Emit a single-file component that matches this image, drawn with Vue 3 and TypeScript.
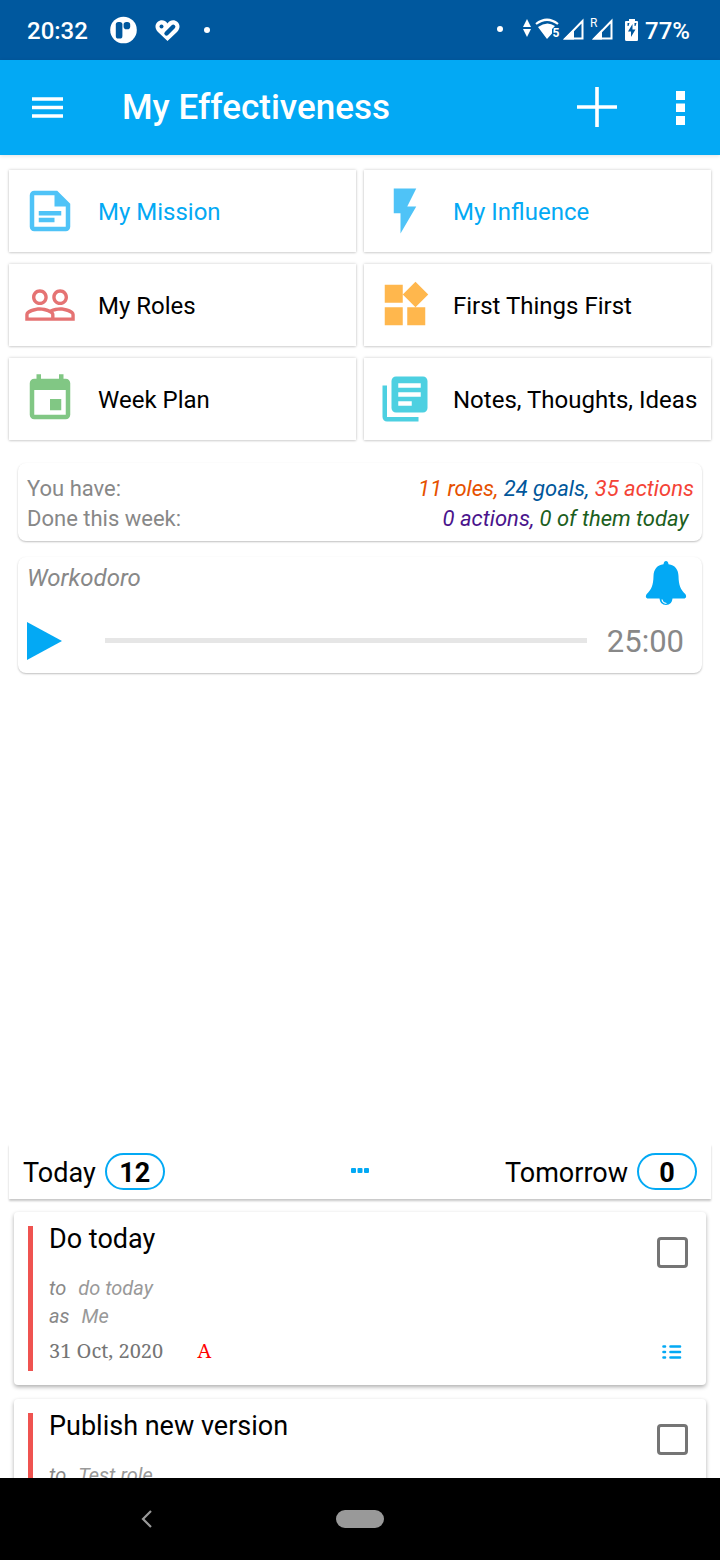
<script setup lang="ts">
import { ref } from 'vue'

interface Shortcut {
  label: string
  color: string
  accent: boolean
  path: string
}

interface Task {
  id: string
  title: string
  goal: string
  role: string
  date: string
  priority: string
  done: boolean
}

const shortcuts: Shortcut[] = [
  {
    label: 'My Mission',
    color: '#4fc3f7',
    accent: true,
    path: 'M5 3h10.200l5.800 5.800V19c0 1.100-.9 2-2 2H5c-1.100 0-2-.9-2-2V5c0-1.100.9-2 2-2zM5 5v14h14v-9h-5V5zM7 12h10v2H7zM7 15h7v2H7z',
  },
  { label: 'My Influence', color: '#4fc3f7', accent: true, path: 'M7 2v11h3v9l7-12h-4l4-8z' },
  {
    label: 'My Roles',
    color: '#e57373',
    accent: false,
    path: 'M16.5 13c-1.200 0-3.070.34-4.500 1-1.430-.67-3.300-1-4.500-1C5.330 13 1 14.080 1 16.250V19h22v-2.750c0-2.170-4.330-3.250-6.500-3.250zm-4 4.500h-10v-1.250c0-.54 2.560-1.750 5-1.750s5 1.210 5 1.750v1.250zm9 0H14v-1.250c0-.46-.2-.86-.52-1.220.88-.3 1.960-.53 3.020-.53 2.440 0 5 1.210 5 1.750v1.250zM7.500 12c1.930 0 3.500-1.570 3.500-3.500S9.430 5 7.500 5 4 6.570 4 8.500 5.570 12 7.500 12zm0-5.500c1.100 0 2 .9 2 2s-.9 2-2 2-2-.9-2-2 .9-2 2-2zm9 5.500c1.930 0 3.500-1.570 3.500-3.500S18.430 5 16.500 5 13 6.570 13 8.500s1.570 3.500 3.500 3.500zm0-5.500c1.100 0 2 .9 2 2s-.9 2-2 2-2-.9-2-2 .9-2 2-2z',
  },
  {
    label: 'First Things First',
    color: '#ffb74d',
    accent: false,
    path: 'M13 13v8h8v-8h-8zM3 21h8v-8H3v8zM3 3v8h8V3H3zm13.660-1.310L11 7.340 16.660 13l5.660-5.660-5.660-5.650z',
  },
  {
    label: 'Week Plan',
    color: '#81c784',
    accent: false,
    path: 'M17 12h-5v5h5v-5zM16 1v2H8V1H6v2H5c-1.110 0-2 .9-2 2v14c0 1.100.89 2 2 2h14c1.100 0 2-.9 2-2V5c0-1.100-.9-2-2-2h-1V1h-2zm3 18H5V8h14v11z',
  },
  {
    label: 'Notes, Thoughts, Ideas',
    color: '#4dd0e1',
    accent: false,
    path: 'M4 6H2v14c0 1.100.9 2 2 2h14v-2H4V6zm16-4H8c-1.100 0-2 .9-2 2v12c0 1.100.9 2 2 2h12c1.100 0 2-.9 2-2V4c0-1.100-.9-2-2-2zm-1 9H9V9h10v2zm-4 4H9v-2h6v2zm4-8H9V5h10v2z',
  },
]

const tasks = ref<Task[]>([
  { id: 'today', title: 'Do today', goal: 'do today', role: 'Me', date: '31 Oct, 2020', priority: 'A', done: false },
  { id: 'publish', title: 'Publish new version', goal: 'Test role', role: 'Me', date: '31 Oct, 2020', priority: 'A', done: false },
])
</script>

<template>
  <div class="screen">
    <div class="status">
      <div class="status-left">
        <span>20:32</span>
        <svg width="31" height="28" viewBox="-1 0 31 28">
          <circle cx="16.500" cy="14" r="13.300" fill="#fff" />
          <rect x="8.800" y="6" width="6.600" height="16.600" rx="2.600" fill="#00589e" />
          <rect x="16.600" y="6" width="6.600" height="7.200" rx="2.800" fill="#00589e" />
        </svg>
        <svg width="26" height="24" viewBox="0 0 26 24">
          <path d="M12.500 5.500C10 1.500 5.500 1.200 2.500 4c-3 3-2.500 7 .5 10l9.500 9 9.500-9c3-3 3.500-7 .5-10-3-2.800-7.500-2.500-10 1.500z" fill="#fff" />
          <circle cx="6.500" cy="8.500" r="2" fill="#00589e" />
          <path d="M11.500 15.500l6.700-6.700" stroke="#00589e" stroke-width="4.400" stroke-linecap="round" />
        </svg>
        <svg width="16" height="6" viewBox="0 0 16 6"><circle cx="8" cy="3" r="3" fill="#fff" /></svg>
      </div>
      <div class="status-right">
        <svg width="23" height="24" viewBox="0 0 23 24"><circle cx="3" cy="11" r="3" fill="#fff" /></svg>
        <svg width="10" height="24" viewBox="0 0 10 24"><path d="M1 9l4-8 4 8zM1 11h8l-4 8z" fill="#fff" /></svg>
        <svg width="26" height="24" viewBox="0 0 26 24">
          <path d="M2 6Q13-2.500 24 6" fill="none" stroke="#fff" stroke-width="2.200" />
          <path d="M4 9Q13 2.500 21 8L18 11v4.500L13 21z" fill="#fff" />
          <text x="18.500" y="19" class="tiny bold">5</text>
        </svg>
        <svg width="25" height="24" viewBox="0 0 25 24">
          <path d="M3.500 20.500L20.500 3v17.500z" fill="none" stroke="#fff" stroke-width="2" />
          <path d="M1 21.500L12 11v10.500z" fill="#fff" />
        </svg>
        <svg width="34" height="32" viewBox="0 -4 34 32">
          <path d="M5.500 20.500L22.500 3v17.500z" fill="none" stroke="#fff" stroke-width="2" />
          <path d="M3 21.500L13 11.500v10z" fill="#fff" />
          <text x="1" y="9" class="tiny">R</text>
        </svg>
        <svg width="18" height="24" viewBox="0 0 18 24">
          <path d="M4 1h6v2h2q1 0 1 1v17.500q0 1.500-1 1.500H1.500Q0 23 0 21.500V4q0-1 1-1h3z" fill="#fff" />
          <path d="M7.500 6l-4.500 7.500h3v5.500l4.500-7.500h-3zM2.500 5h2l-1 3h-1zM9.500 5h2l-1 3h-1z" fill="#00589e" />
        </svg>
        <span>77%</span>
      </div>
    </div>

    <header class="appbar">
      <button class="plain" aria-label="Open menu">
        <svg width="32" height="24" viewBox="0 0 32 24"><path d="M0 3h31M0 11.500h31M0 20h31" stroke="#fff" stroke-width="3.500" /></svg>
      </button>
      <h1>My Effectiveness</h1>
      <button class="plain" aria-label="Add">
        <svg width="40" height="42" viewBox="0 0 40 42"><path d="M20 0v40M0 20h40" stroke="#fff" stroke-width="3.600" /></svg>
      </button>
      <button class="plain" aria-label="More options">
        <svg width="10" height="34" viewBox="0 0 10 34"><path d="M0 0h9v9H0zM0 12.500h9v8.500H0zM0 25h9v9H0z" fill="#fff" /></svg>
      </button>
    </header>

    <main>
      <div class="overview">
        <nav class="grid" aria-label="Sections">
          <button v-for="s in shortcuts" :key="s.label" class="tile" :class="{ accent: s.accent }">
            <svg width="54" height="54" viewBox="0 0 24 24"><path :d="s.path" :fill="s.color" fill-rule="evenodd" /></svg>
            <span>{{ s.label }}</span>
          </button>
        </nav>

        <section class="panel stats">
          <div class="row">
            <span>You have:</span>
            <em><span class="orange">11 roles, </span><span class="navy">24 goals, </span><span class="red">35 actions</span></em>
          </div>
          <div class="row">
            <span>Done this week:</span>
            <em><span class="purple">0 actions, </span><span class="green">0 of them today </span></em>
          </div>
        </section>

        <section class="panel timer">
          <div class="row">
            <h2>Workodoro</h2>
            <button class="plain" aria-label="Toggle sound">
              <svg width="42" height="46" viewBox="0 0 42 46">
                <path d="M21 1q2 0 2.500 3.200C30 5 33.300 9.500 33.500 16c.2 9 2 13.500 6.700 18 1.800 2.200.8 4.500-1.200 4.500H27.500q-.5 6.500-6.500 6.500t-6.500-6.500H3c-2 0-3-2.300-1.200-4.500 4.700-4.500 6.500-9 6.700-18C8.700 9.500 12 5 18.500 4.200Q19 1 21 1z" fill="#03a9f4" />
                <path d="M17 39.500q.5 3.500 4.500 4" fill="none" stroke="#fff" stroke-width="1.200" />
              </svg>
            </button>
          </div>
          <div class="player">
            <button class="plain" aria-label="Start timer">
              <svg width="36" height="40" viewBox="0 0 36 40"><path d="M0 1l35 19L0 39z" fill="#03a9f4" /></svg>
            </button>
            <progress max="100" value="0" aria-label="Timer progress"></progress>
            <time>25:00</time>
          </div>
        </section>
      </div>

      <section class="agenda">
        <div class="tabs">
          <button class="plain tab"><span>Today</span><b>12</b></button>
          <button class="plain" aria-label="Resize list">
            <svg width="18" height="8" viewBox="0 0 18 8"><path d="M1 0h3q1 0 1 1v3q0 1-1 1H1q-1 0-1-1V1q0-1 1-1zM7.500 0h3q1 0 1 1v3q0 1-1 1h-3q-1 0-1-1V1q0-1 1-1zM14 0h3q1 0 1 1v3q0 1-1 1h-3q-1 0-1-1V1q0-1 1-1z" fill="#03a9f4" /></svg>
          </button>
          <button class="plain tab end"><span>Tomorrow</span><b>0</b></button>
        </div>
        <div class="list">
          <article v-for="t in tasks" :key="t.id" class="task">
            <div class="body">
              <h3><label :for="'done-' + t.id">{{ t.title }}</label></h3>
              <p><span>to</span>{{ t.goal }}</p>
              <p><span>as</span>{{ t.role }}</p>
              <div class="meta"><span>{{ t.date }}</span><strong>{{ t.priority }}</strong></div>
            </div>
            <div class="side">
              <input :id="'done-' + t.id" v-model="t.done" type="checkbox" />
              <button class="plain" aria-label="Details">
                <svg width="22" height="16" viewBox="0 0 22 16"><path d="M1.500 2.500h1.500M1.500 8h1.500M1.500 13.500h1.500M8.500 2.500h9.500M8.500 8h9.500M8.500 13.500h9.500" stroke="#03a9f4" stroke-width="2.600" stroke-linecap="round" /></svg>
              </button>
            </div>
          </article>
        </div>
      </section>
    </main>

    <footer class="navbar">
      <button class="plain" aria-label="Back">
        <svg width="20" height="20" viewBox="0 0 20 20"><path d="M17 2l-8 8 8 8" fill="none" stroke="#999" stroke-width="2.200" /></svg>
      </button>
      <button class="plain home" aria-label="Home"></button>
    </footer>
  </div>
</template>

<style>
body {
  background: #fff;
}
</style>

<style scoped>
.screen {
  height: 100vh;
  display: flex;
  flex-direction: column;
  font-family: Roboto, "Liberation Sans", sans-serif;
  color: #000;
  overflow: hidden;
}
svg {
  display: block;
  flex: none;
}
h1, h2, h3, p {
  margin: 0;
  font-weight: 400;
}
button {
  font: inherit;
  color: inherit;
  cursor: pointer;
}
.plain {
  border: 0;
  padding: 0;
  background: none;
}
.status {
  height: 60px;
  flex: none;
  display: flex;
  align-items: center;
  justify-content: space-between;
  padding: 0 30px 0 27px;
  background: #00589e;
  color: #fff;
  font-size: 24px;
  font-weight: 500;
}
.status span {
  padding-top: 1px;
}
.status-left, .status-right {
  display: flex;
  align-items: center;
  gap: 18px;
}
.status-right {
  gap: 2px;
}
.tiny {
  font-size: 12px;
  fill: #fff;
  font-weight: 400;
}
.bold {
  font-weight: 700;
}
.appbar {
  height: 95px;
  flex: none;
  display: flex;
  align-items: center;
  padding: 0 34px 0 32px;
  background: #03a9f4;
  box-shadow: 0 1px 4px rgba(0, 0, 0, 0.12);
  color: #fff;
}
.appbar h1 {
  flex: 1;
  margin-left: 58px;
  font-size: 35px;
  font-weight: 500;
}
.appbar .plain + .plain {
  margin-left: 59px;
}
main {
  flex: 1;
  min-height: 0;
  display: flex;
  flex-direction: column;
  justify-content: space-between;
}
.grid {
  display: grid;
  grid-template-columns: 1fr 1fr;
  gap: 12px 8px;
  padding: 15px 9px 23px;
}
.tile {
  min-width: 0;
  height: 82px;
  display: flex;
  align-items: center;
  gap: 21px;
  padding: 0 0 0 14px;
  border: 0;
  background: #fff;
  box-shadow: 0 0 3px rgba(0, 0, 0, 0.2), 0 1px 2px rgba(0, 0, 0, 0.1);
  font-size: 24px;
  white-space: nowrap;
}
.tile span, .tab span {
  padding-top: 2px;
}
.accent {
  color: #03a9f4;
}
.panel {
  margin: 0 18px 16px;
  border-radius: 8px;
  background: #fff;
  box-shadow: 0 1px 2px rgba(0, 0, 0, 0.25);
  color: #888;
}
.stats {
  padding: 11px 8px 7px 9px;
  font-size: 22px;
  line-height: 30px;
}
.row {
  display: flex;
  justify-content: space-between;
}
.row em {
  white-space: pre;
}
.orange { color: #e65100; }
.navy { color: #01579b; }
.red { color: #f44336; }
.purple { color: #4a148c; }
.green { color: #1b5e20; }
.timer {
  padding: 3px 15px 11px 9px;
}
.timer h2 {
  font-size: 24px;
  line-height: 36px;
  font-style: italic;
}
.player {
  display: flex;
  align-items: center;
  padding: 14px 3px 0 0;
}
.player progress {
  flex: 1;
  min-width: 0;
  height: 5px;
  margin: 0 20px 2px 42px;
  appearance: none;
  border: 0;
  background: #e6e6e6;
}
.player progress::-webkit-progress-bar {
  background: #e6e6e6;
}
.player progress::-webkit-progress-value {
  background: #03a9f4;
}
.player time {
  padding-top: 2px;
  font-size: 31px;
  line-height: 40px;
}
.tabs {
  height: 55px;
  margin: 0 9px;
  padding: 0 14px;
  display: grid;
  grid-template-columns: 1fr auto 1fr;
  align-items: center;
  background: #fff;
  box-shadow: 0 2px 2px rgba(0, 0, 0, 0.22);
  font-size: 27px;
}
.tab {
  display: flex;
  align-items: center;
  gap: 9px;
}
.end {
  justify-content: flex-end;
}
.tab b {
  box-sizing: border-box;
  min-width: 60px;
  height: 37px;
  border: 2px solid #03a9f4;
  border-radius: 19px;
  line-height: 36px;
  text-align: center;
}
.list {
  height: 266px;
  padding: 13px 14px 0;
  overflow: hidden;
}
.task {
  display: flex;
  gap: 16px;
  padding: 14px;
  margin-bottom: 14px;
  border-radius: 4px;
  background: #fff;
  box-shadow: 0 2px 4px rgba(0, 0, 0, 0.32);
}
.body {
  flex: 1;
  border-left: 5px solid #ef5350;
  padding-left: 16px;
}
.task h3 {
  margin-bottom: 22px;
  font-size: 27px;
  line-height: 26px;
}
.task p {
  font-size: 20px;
  line-height: 28px;
  font-style: italic;
  color: #999;
}
.task p span {
  margin-right: 12px;
  color: #888;
}
.meta {
  display: flex;
  gap: 34px;
  font-family: "Noto Serif", "Liberation Serif", serif;
  font-size: 20px;
  line-height: 41px;
  color: #757575;
}
.meta strong {
  font-weight: 400;
  color: #f00;
}
.side {
  display: flex;
  flex-direction: column;
  align-items: center;
  justify-content: space-between;
  padding: 11px 4px 11px 0;
}
.side input {
  appearance: none;
  box-sizing: border-box;
  width: 31px;
  height: 31px;
  margin: 0;
  border: 3px solid #757575;
  border-radius: 4px;
}
.side input:checked {
  background: #03a9f4;
}
.navbar {
  height: 82px;
  flex: none;
  display: grid;
  grid-template-columns: 2fr 1fr 2fr;
  align-items: center;
  justify-items: center;
  background: #000;
}
.home {
  width: 48px;
  height: 18px;
  border-radius: 9px;
  background: #999;
}
</style>
